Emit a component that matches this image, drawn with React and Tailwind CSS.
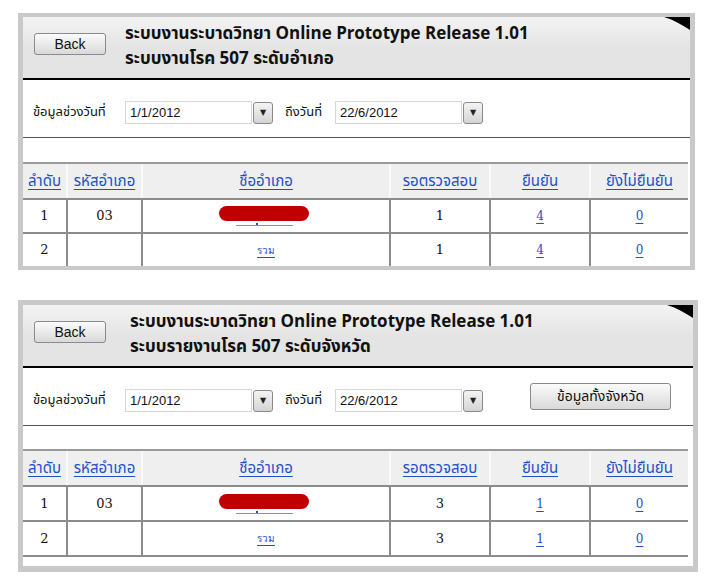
import React from 'react';

const thai = "font-['Tahoma','Noto_Sans_Thai','Noto_Sans','DejaVu_Sans',sans-serif]";

function Corner() {
  return (
    <svg className="absolute right-0 top-0" width="26" height="14" viewBox="0 0 26 14">
      <path d="M0 0 L26 0 L26 13 C18 8 10 3 0 0 Z" fill="#000" />
    </svg>
  );
}

function DateBox({ value, w }) {
  return (
    <div className="flex items-center">
      <div
        className={`h-[23px] ${w} border border-[#d6d6d6] bg-white flex items-center pl-[4px] text-[13px] font-['Liberation_Sans',sans-serif] text-[#111]`}
      >
        {value}
      </div>
      <div className="ml-[1px] w-[20px] h-[22px] rounded-[3px] border border-[#8a8a8a] bg-gradient-to-b from-[#f4f4f4] to-[#d4d4d4] flex items-center justify-center text-[8px] text-[#222]">
        ▼
      </div>
    </div>
  );
}

function Link({ children, cls = 'text-[12px]' }) {
  return <span className={`text-[#1e50c8] underline underline-offset-[3px] ${cls}`}>{children}</span>;
}

function Table({ pending, ok, rowH }) {
  const heads = ['ลำดับ', 'รหัสอำเภอ', 'ชื่ออำเภอ', 'รอตรวจสอบ', 'ยืนยัน', 'ยังไม่ยืนยัน'];
  const widths = ['w-[43px]', 'w-[75px]', 'w-[248px]', 'w-[100px]', 'w-[100px]', 'w-[99px]'];
  return (
    <div className={`w-[665px] border-t-2 border-[#9a9a9a] ${thai}`}>
      <div className="flex h-[34px] bg-[#efefef]">
        {heads.map((h, i) => (
          <div
            key={h}
            className={`${widths[i]} flex items-center justify-center pt-[2px] ${i > 0 ? 'border-l-2 border-[#fafafa]' : ''}`}
          >
            <Link cls="text-[15px]">{h}</Link>
          </div>
        ))}
      </div>
      {[
        ['1', '03'],
        ['2', ''],
      ].map((r, ri) => (
        <div
          key={ri}
          className={`flex ${rowH} border-t-2 border-[#8c8c8c] bg-white text-[13px] font-['Tahoma','DejaVu_Serif',serif] text-[#111]`}
        >
          <div className={`${widths[0]} flex items-center justify-center`}>{r[0]}</div>
          <div className={`${widths[1]} flex items-center justify-center border-l-2 border-[#8c8c8c]`}>{r[1]}</div>
          <div className={`${widths[2]} flex items-center justify-center border-l-2 border-[#8c8c8c]`}>
            {ri === 0 ? (
              <div className="relative w-[90px] h-[24px] -ml-[4px] mt-[2px]">
                <div className="absolute left-0 top-[1px] w-[90px] h-[15px] rounded-full bg-[#c00000]" />
                <div className="absolute left-[17px] top-[20px] w-[57px] h-[1px] bg-[#5a9ee0]" />
                <div className="absolute left-[37px] top-[18px] w-[2px] h-[2px] bg-[#1e50c8]" />
              </div>
            ) : (
              <Link cls="text-[10px]">รวม</Link>
            )}
          </div>
          <div className={`${widths[3]} flex items-center justify-center border-l-2 border-[#8c8c8c]`}>{pending}</div>
          <div className={`${widths[4]} flex items-center justify-center border-l-2 border-[#8c8c8c]`}>
            <Link>{ok}</Link>
          </div>
          <div className={`${widths[5]} flex items-center justify-center border-l-2 border-[#8c8c8c]`}>
            <Link>0</Link>
          </div>
        </div>
      ))}
    </div>
  );
}

function Panel({ subtitle, pending, ok, province, titleX }) {
  return (
    <div
      className={`bg-white border-[#c9c9c9] ${province ? 'w-[680px] border-x-[5px] border-t-[5px] border-b-[6px]' : 'w-[677px] border-x-[5px] border-y-4'}`}
    >
      <div className="relative h-[63px] bg-gradient-to-b from-[#f3f3f3] via-[#e4e4e4] to-[#e4e4e4] border-b-2 border-black flex items-start">
        <Corner />
        <div className="ml-[11px] mt-[16px] w-[72px] h-[22px] rounded-[3px] border border-[#8a8a8a] bg-gradient-to-b from-[#fbfbfb] to-[#d9d9d9] flex items-center justify-center text-[14px] font-['Liberation_Sans',sans-serif] text-[#111]">
          Back
        </div>
        <div className={`${titleX} mt-[5px] font-bold text-[17px] leading-[25px] text-[#111] ${thai}`}>
          <div>ระบบงานระบาดวิทยา Online Prototype Release 1.01</div>
          <div>{subtitle}</div>
        </div>
      </div>
      <div className={`h-[58px] border-b border-[#555] flex items-start pt-[21px] text-[13px] text-[#111] ${thai}`}>
        <div className="ml-[10px] w-[92px] leading-[23px]">ข้อมูลช่วงวันที่</div>
        <DateBox value="1/1/2012" w="w-[127px]" />
        <div className="ml-[12px] w-[50px] leading-[23px]">ถึงวันที่</div>
        <DateBox value="22/6/2012" w="w-[127px]" />
        {province && (
          <div className="ml-[47px] -mt-[6px] w-[141px] h-[27px] rounded-[3px] border border-[#8a8a8a] bg-gradient-to-b from-[#fbfbfb] to-[#d9d9d9] flex items-center justify-center text-[14px]">
            ข้อมูลทั้งจังหวัด
          </div>
        )}
      </div>
      <div className={province ? 'h-[23px]' : 'h-[24px]'} />
      <Table pending={pending} ok={ok} rowH={province ? 'h-[35px]' : 'h-[34px]'} />
      {province && <div className="h-[11px] border-t-2 border-[#8c8c8c] w-[665px]" />}
    </div>
  );
}

export default function App() {
  return (
    <div className="w-[711px] h-[586px] bg-white pt-[13px] pl-[18px] overflow-hidden">
      <Panel subtitle="ระบบงานโรค 507 ระดับอำเภอ" pending="1" ok="4" titleX="ml-[19px]" />
      <div className="h-[30px]" />
      <Panel subtitle="ระบบรายงานโรค 507 ระดับจังหวัด" pending="3" ok="1" province titleX="ml-[24px]" />
    </div>
  );
}
